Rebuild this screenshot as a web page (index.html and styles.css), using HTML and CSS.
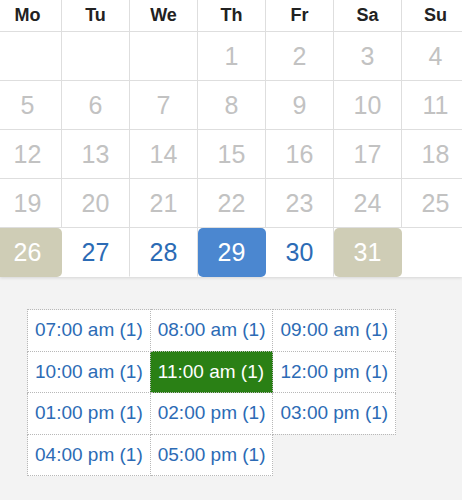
FILE: index.html
```html
<!DOCTYPE html>
<html lang="en">
<head>
    <meta charset="UTF-8">
    <meta name="viewport" content="width=device-width, initial-scale=1.0">
    <title>Booking</title>
    <link rel="stylesheet" href="styles.css">
</head>
<body>
    <div class="calendar">
        <table class="month">
            <thead>
                <tr>
                    <th>Mo</th><th>Tu</th><th>We</th><th>Th</th><th>Fr</th><th>Sa</th><th>Su</th>
                </tr>
            </thead>
            <tbody>
                <tr>
                    <td></td><td></td><td></td>
                    <td class="day--off">1</td><td class="day--off">2</td><td class="day--off">3</td><td class="day--off">4</td>
                </tr>
                <tr>
                    <td class="day--off">5</td><td class="day--off">6</td><td class="day--off">7</td><td class="day--off">8</td>
                    <td class="day--off">9</td><td class="day--off">10</td><td class="day--off">11</td>
                </tr>
                <tr>
                    <td class="day--off">12</td><td class="day--off">13</td><td class="day--off">14</td><td class="day--off">15</td>
                    <td class="day--off">16</td><td class="day--off">17</td><td class="day--off">18</td>
                </tr>
                <tr>
                    <td class="day--off">19</td><td class="day--off">20</td><td class="day--off">21</td><td class="day--off">22</td>
                    <td class="day--off">23</td><td class="day--off">24</td><td class="day--off">25</td>
                </tr>
                <tr class="month__last">
                    <td class="day--closed">26</td>
                    <td class="day">27</td>
                    <td class="day">28</td>
                    <td class="day--active">29</td>
                    <td class="day">30</td>
                    <td class="day--closed">31</td>
                    <td></td>
                </tr>
            </tbody>
        </table>
    </div>

    <div class="slots">
        <table class="slots__table">
            <tr>
                <td class="slot">07:00 am (1)</td>
                <td class="slot">08:00 am (1)</td>
                <td class="slot">09:00 am (1)</td>
            </tr>
            <tr>
                <td class="slot">10:00 am (1)</td>
                <td class="slot slot--picked">11:00 am (1)</td>
                <td class="slot">12:00 pm (1)</td>
            </tr>
            <tr>
                <td class="slot">01:00 pm (1)</td>
                <td class="slot">02:00 pm (1)</td>
                <td class="slot">03:00 pm (1)</td>
            </tr>
            <tr>
                <td class="slot">04:00 pm (1)</td>
                <td class="slot">05:00 pm (1)</td>
                <td class="slot--empty"></td>
            </tr>
        </table>
    </div>
</body>
</html>
```

FILE: styles.css
```css
:root {
    --grid-color: #dedede;
    --link-color: #2c6bb5;
    --muted-color: #c2c2c2;
    --closed-bg: #cfcdb6;
    --active-bg: #4b87d0;
    --picked-bg: #2a8015;
    --page-bg: #f3f3f3;
}

body {
    margin: 0;
    background-color: var(--page-bg);
    font-family: "Liberation Sans", Arial, sans-serif;
}

.calendar {
    background-color: white;
    overflow: hidden;
    box-shadow: 0 1px 3px rgba(0, 0, 0, 0.12);
}

.month {
    width: 476px;
    margin-left: -6px;
    border-collapse: separate;
    border-spacing: 0;
    table-layout: fixed;
}
.month th,
.month td {
    padding: 0;
    text-align: center;
    border-right: 1px solid var(--grid-color);
    border-bottom: 1px solid var(--grid-color);
}
.month th {
    height: 31px;
    font-size: 18px;
    font-weight: bold;
    color: #222;
}
.month td {
    height: 48px;
    font-size: 25px;
    color: var(--muted-color);
}
.month__last td {
    border-bottom-color: transparent;
}

.day {
    color: var(--link-color) !important;
}
.day--closed,
.day--active {
    color: white !important;
    border-color: transparent !important;
    border-radius: 5px;
}
.day--closed {
    background-color: var(--closed-bg);
}
.day--active {
    background-color: var(--active-bg);
}

.slots {
    padding: 32px 0 0 27px;
}
.slots__table {
    border-collapse: collapse;
}
.slot {
    height: 40.5px;
    padding: 0 7px;
    font-size: 19px;
    color: var(--link-color);
    background-color: white;
    border: 1px dotted #b8b8b8;
    white-space: nowrap;
}
.slot--picked {
    color: white;
    background-color: var(--picked-bg);
}
.slot--empty {
    border: 0;
}
```
